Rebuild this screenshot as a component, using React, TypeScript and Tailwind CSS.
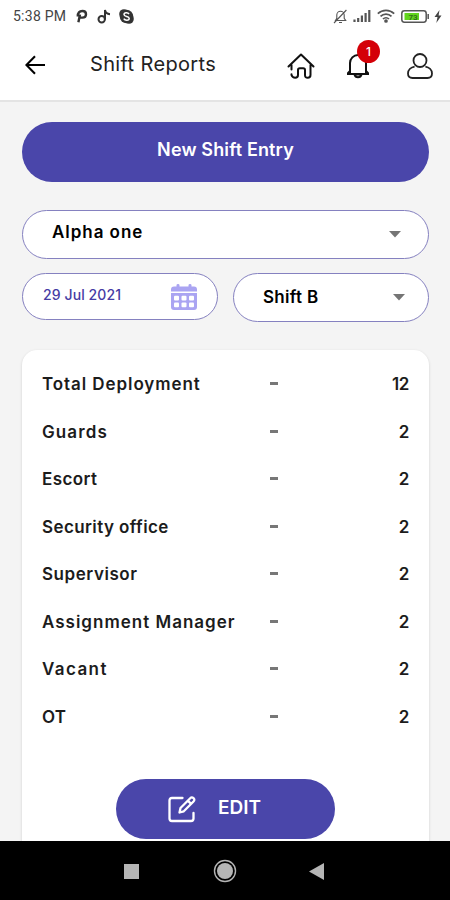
const rows = [
  { label: "Total Deployment", value: "12", spacing: "tracking-[0.92px]" },
  { label: "Guards", value: "2", spacing: "tracking-[1.1px]" },
  { label: "Escort", value: "2", spacing: "tracking-[0.4px]" },
  { label: "Security office", value: "2", spacing: "tracking-[0.4px]" },
  { label: "Supervisor", value: "2", spacing: "tracking-[0.55px]" },
  { label: "Assignment Manager", value: "2", spacing: "tracking-[1px]" },
  { label: "Vacant", value: "2", spacing: "tracking-[1.4px]" },
  { label: "OT", value: "2", spacing: "tracking-[0.1px]" },
];

function StatusBar() {
  return (
    <div className="flex h-8 items-center justify-between pl-[13px] pr-2 text-[#444]">
      <div className="flex items-center">
        <span className="w-[54px] whitespace-nowrap font-['Roboto',sans-serif] text-[14px] tracking-[0.25px]">
          5:38 PM
        </span>
        <svg className="ml-[9px]" width="12" height="14" viewBox="0 0 12 14" fill="none" stroke="#333" strokeWidth="2.4">
          <path d="M2.4 13.2 4 5.500M1.800 7.500Q1.800 2 6.400 2q3.600 0 3.600 3.200 0 3.400-3.600 3.400H4.400" />
        </svg>
        <svg className="ml-[9px]" width="14" height="15" viewBox="0 0 14 15" fill="none" stroke="#333" strokeWidth="2">
          <circle cx="4.7" cy="10.2" r="3.2" />
          <path d="M8 10.5V1c.4 2.6 2 4 5 4.2" />
        </svg>
        <svg className="ml-2" width="15" height="15" viewBox="0 0 15 15">
          <circle cx="5" cy="5" r="4.8" fill="#333" />
          <circle cx="10" cy="10" r="4.8" fill="#333" />
          <circle cx="7.5" cy="7.5" r="6.8" fill="#333" />
          <path d="M10 5.2C9 3.2 5 3.4 5 5.6c0 2.5 5.2 1.3 5.2 3.8 0 2.2-4.2 2.5-5.4.3" fill="none" stroke="#fff" strokeWidth="1.5" />
        </svg>
      </div>
      <div className="flex items-center">
        <svg width="15" height="15" viewBox="0 0 15 15" fill="none" stroke="#555" strokeWidth="1.1">
          <path d="M2.5 11.5h10.2l-1.5-2.2V6a3.7 3.7 0 0 0-7.4 0v3.3zM6 13.5h3M13.4 1 1 14" />
        </svg>
        <svg className="ml-[5px]" width="18" height="14" viewBox="0 0 18 14" stroke="#555" strokeWidth="2.2">
          <path d="M1.5 13v-2.5M5.2 13V9M8.9 13V6.5M12.6 13V4M16.3 13V1" />
        </svg>
        <svg className="ml-[6px]" width="18" height="14" viewBox="0 0 18 14" fill="none" stroke="#555" strokeWidth="1.7">
          <path d="M.8 4.6a11.8 11.8 0 0 1 16.4 0M3.5 7.4a7.8 7.8 0 0 1 11 0M6 10a4.2 4.2 0 0 1 6 0" />
          <circle cx="9" cy="12" r="1" fill="#555" />
        </svg>
        <svg className="ml-[6px]" width="29" height="13" viewBox="0 0 29 13">
          <rect x=".8" y=".8" width="24.4" height="11.4" rx="2.6" fill="#fff" stroke="#555" strokeWidth="1.5" />
          <rect x="3.500" y="3" width="14.500" height="7" fill="#62d51c" />
          <path d="M27.2 4v5" stroke="#555" strokeWidth="1.5" />
          <text x="7.5" y="9.5" fontSize="8" fontFamily="Roboto, sans-serif" fontWeight="700" fill="#34701a">
            73
          </text>
        </svg>
        <svg className="ml-[4px]" width="8" height="13" viewBox="0 0 8 13" fill="#444">
          <path d="M5.5 0 .5 7h3l-1.2 6 5.2-7.4H4.6z" />
        </svg>
      </div>
    </div>
  );
}

function Header() {
  return (
    <header className="flex h-[68px] items-center bg-white pl-[25px] pr-[16px] text-black">
      <svg className="mt-[-2px]" width="20" height="20" viewBox="0 0 20 20" fill="none" stroke="black" strokeWidth="2.1">
        <path d="M20 10H1.5M10 1.3 1.4 10l8.6 8.7" />
      </svg>
      <h1 className="ml-[45px] mt-[-5px] w-[127px] whitespace-nowrap text-[20px] tracking-[0.35px] text-[#222]">
        Shift Reports
      </h1>
      <svg className="ml-[70px]" width="28" height="28" viewBox="0 0 28 28" fill="none" stroke="#111" strokeWidth="2" strokeLinecap="round" strokeLinejoin="round">
        <path d="M1.500 14.500 14 2.500l12.500 12M23.500 13V23q0 2.800-2.800 2.800T18 23v-5q0-1.800-1.800-1.800h-3.400q-1.800 0-1.800 1.800v5q0 2.800-2.800 2.800T4.500 23v-.8M4.500 13v4.500" />
      </svg>
      <div className="relative ml-[31px]">
        <svg width="24" height="28" viewBox="0 0 24 28" fill="none" stroke="#111" strokeWidth="2">
          <path d="M1 22h22M4 21.500V11a8 8 0 0 1 16 0v10.500M1.700 21.500 4 19M22.300 21.500 20 19" />
          <path d="M8.500 22.500a3.600 3.600 0 0 0 7 0z" />
        </svg>
        <span className="absolute left-[11px] top-[-12px] flex size-[23px] items-center justify-center rounded-full bg-[#d40008] text-[12px] font-medium text-white">
          1
        </span>
      </div>
      <svg className="ml-[37px]" width="26" height="26" viewBox="0 0 26 26" fill="none" stroke="#222" strokeWidth="1.8">
        <circle cx="13" cy="7.500" r="6.500" />
        <path d="M7.6 13.6C4 14.2 1 17 1 20.5 1 23.5 2.5 25 5.5 25h15c3 0 4.5-1.5 4.5-4.5 0-3.5-3-6.3-6.6-6.9" />
      </svg>
    </header>
  );
}

function Caret() {
  return (
    <svg width="12" height="7" viewBox="0 0 12 7" fill="#757575">
      <path d="M0 0h12L6 6.5z" />
    </svg>
  );
}

function CalendarIcon() {
  return (
    <svg width="26" height="26" viewBox="0 0 26 26" fill="#aaa4f2">
      <path d="M5.500 2.500V1.300Q5.500 0 7 0t1.500 1.300v1.200h9V1.300Q17.500 0 19 0t1.500 1.300v1.200H23q3 0 3 3v2H0v-2q0-3 3-3z" />
      <path d="M0 9h26v14q0 3-3 3H3q-3 0-3-3z" />
      <g fill="#fff">
        <rect x="3" y="11.800" width="5" height="4.600" rx="1" />
        <rect x="10.500" y="11.800" width="5" height="4.600" rx="1" />
        <rect x="18" y="11.800" width="5" height="4.600" rx="1" />
        <rect x="3" y="18.600" width="5" height="4.600" rx="1" />
        <rect x="10.500" y="18.600" width="5" height="4.600" rx="1" />
        <rect x="18" y="18.600" width="5" height="4.600" rx="1" />
      </g>
    </svg>
  );
}

export default function App() {
  return (
    <div className="flex h-[900px] w-[450px] flex-col overflow-hidden bg-white font-['Inter',sans-serif]">
      <StatusBar />
      <Header />

      <main className="flex min-h-0 flex-1 flex-col overflow-hidden border-t-2 border-[#e4e4e4] bg-[#f4f4f4] pl-[22px] pr-[21px] pt-5">
        <button className="h-[60px] shrink-0 rounded-full bg-[#4a46aa] pb-[5px] text-[18px] font-semibold tracking-[0.15px] text-white">
          New Shift Entry
        </button>

        {/* Filters */}
        <div className="mt-[28px] flex h-[49px] shrink-0 items-center justify-between rounded-full border border-[#8581c0] bg-white pl-[29px] pr-[27px]">
          <span className="mt-[-4px] text-[17px] font-semibold tracking-[0.95px] text-black">Alpha one</span>
          <Caret />
        </div>
        <div className="mt-[14px] flex shrink-0 gap-[15px]">
          <div className="flex h-[47px] w-[196px] items-center justify-between rounded-full border border-[#8581c0] bg-white pl-[20px] pr-[20px]">
            <span className="mt-[-4px] text-[14px] font-medium tracking-[0.1px] text-[#463ca4]">29 Jul 2021</span>
            <CalendarIcon />
          </div>
          <div className="flex h-[49px] flex-1 items-center justify-between rounded-full border border-[#8581c0] bg-white pl-[29px] pr-[23px]">
            <span className="mt-px text-[17px] font-semibold tracking-[0.3px] text-black">Shift B</span>
            <Caret />
          </div>
        </div>

        {/* Report */}
        <section className="mt-[28px] flex flex-1 flex-col rounded-t-[15px] bg-white pl-[20px] pr-[20px] pt-[11px] shadow-[0_1px_3px_rgba(0,0,0,0.15)]">
          {rows.map((row) => (
            <div key={row.label} className="flex h-[47.5px] shrink-0 items-center text-[17px] font-semibold text-[#1c1c1c]">
              <span className={`w-[228px] whitespace-nowrap ${row.spacing}`}>{row.label}</span>
              <span className="mt-[-2px] h-[3px] w-2 bg-[#777]" />
              <span className="flex-1 text-right tracking-[-0.4px]">{row.value}</span>
            </div>
          ))}
          <button className="mt-[38px] flex h-[60px] w-[219px] shrink-0 items-center self-center rounded-full bg-[#4a46aa] pl-[52px] text-white">
            <svg width="28" height="28" viewBox="0 0 28 28" fill="none" stroke="currentColor" strokeWidth="2.300" strokeLinecap="round" strokeLinejoin="round">
              <path d="M14.500 3H4Q1.500 3 1.500 5.500v18Q1.500 26 4 26h19q2.500 0 2.500-2.500V18" />
              <path d="m11.500 17.500 1-4.500L22.200 3.200q1.600-1.600 3.300 0t0 3.300L15.800 16.300zM19.800 5.600l3.300 3.300" />
            </svg>
            <span className="ml-[22px] mt-[-2px] text-[19px] font-semibold">EDIT</span>
          </button>
        </section>
      </main>

      <nav className="flex h-[59px] shrink-0 items-center bg-black pl-[124px] pt-px">
        <span className="size-[15px] bg-[#b5b5b5]" />
        <svg className="ml-[74px]" width="24" height="24" viewBox="0 0 24 24">
          <circle cx="12" cy="12" r="10.500" fill="none" stroke="#b5b5b5" strokeWidth="1.400" />
          <circle cx="12" cy="12" r="8" fill="#b5b5b5" />
        </svg>
        <svg className="ml-[72px]" width="15" height="17" viewBox="0 0 15 17" fill="#b5b5b5">
          <path d="M15 0v17L0 8.500z" />
        </svg>
      </nav>
    </div>
  );
}
